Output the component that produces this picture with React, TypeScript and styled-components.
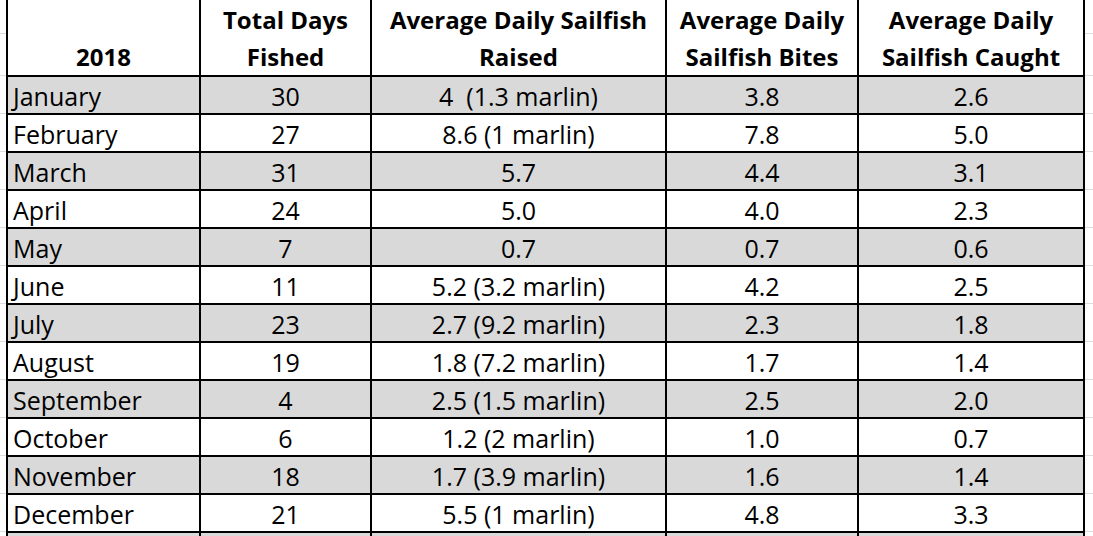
import React from "react";
import styled, { createGlobalStyle } from "styled-components";

const Global = createGlobalStyle`
  html, body { margin: 0; padding: 0; background: #ffffff; }
  body {
    font-family: "Open Sans", "Lato", "Liberation Sans", sans-serif;
    color: #000;
    overflow: hidden;
    background-image: repeating-linear-gradient(
      to bottom,
      transparent 0px,
      transparent 37px,
      #dcdcdc 37px,
      #dcdcdc 38px
    );
    background-position: 0 38px;
  }
`;

const Page = styled.div`
  width: 1093px;
  height: 536px;
  padding-left: 6px;
  box-sizing: border-box;
  overflow: hidden;
`;

const Sheet = styled.div`
  display: grid;
  grid-template-columns: 193px 171px 295px 192px 226px;
  grid-auto-rows: 38px;
  grid-template-rows: 77px;
  border-left: 2px solid #000;
  width: max-content;
`;

const HeaderCell = styled.div`
  box-sizing: border-box;
  border-right: 2px solid #000;
  border-bottom: 2px solid #000;
  background: #fff;
  display: flex;
  align-items: flex-end;
  justify-content: center;
  text-align: center;
  font-weight: 700;
  font-size: 24px;
  line-height: 37px;
  padding-bottom: 0px;
  white-space: pre-line;
`;

const Cell = styled.div<{ $shaded: boolean; $left?: boolean; $open?: boolean }>`
  box-sizing: border-box;
  border-right: 2px solid #000;
  border-bottom: ${(p) => (p.$open ? "none" : "2px solid #000")};
  background: ${(p) => (p.$shaded ? "#d9d9d9" : "#ffffff")};
  display: flex;
  align-items: center;
  justify-content: ${(p) => (p.$left ? "flex-start" : "center")};
  padding-left: ${(p) => (p.$left ? "5px" : "0")};
  padding-top: 1px;
  font-size: 25px;
  line-height: 36px;
  white-space: pre;
`;

const headers = [
  "\n2018",
  "Total Days\nFished",
  "Average Daily Sailfish\nRaised",
  "Average Daily\nSailfish Bites",
  "Average Daily\nSailfish Caught",
];

const rows: string[][] = [
  ["January", "30", "4  (1.3 marlin)", "3.8", "2.6"],
  ["February", "27", "8.6 (1 marlin)", "7.8", "5.0"],
  ["March", "31", "5.7", "4.4", "3.1"],
  ["April", "24", "5.0", "4.0", "2.3"],
  ["May", "7", "0.7", "0.7", "0.6"],
  ["June", "11", "5.2 (3.2 marlin)", "4.2", "2.5"],
  ["July", "23", "2.7 (9.2 marlin)", "2.3", "1.8"],
  ["August", "19", "1.8 (7.2 marlin)", "1.7", "1.4"],
  ["September", "4", "2.5 (1.5 marlin)", "2.5", "2.0"],
  ["October", "6", "1.2 (2 marlin)", "1.0", "0.7"],
  ["November", "18", "1.7 (3.9 marlin)", "1.6", "1.4"],
  ["December", "21", "5.5 (1 marlin)", "4.8", "3.3"],
  ["", "", "", "", ""],
];

export default function App() {
  return (
    <Page>
      <Global />
      <Sheet>
        {headers.map((h, i) => (
          <HeaderCell key={`h${i}`}>{h}</HeaderCell>
        ))}
        {rows.map((r, ri) =>
          r.map((v, ci) => (
            <Cell
              key={`${ri}-${ci}`}
              $shaded={ri % 2 === 0}
              $left={ci === 0}
              $open={ri === rows.length - 1}
            >
              {v}
            </Cell>
          ))
        )}
      </Sheet>
    </Page>
  );
}
